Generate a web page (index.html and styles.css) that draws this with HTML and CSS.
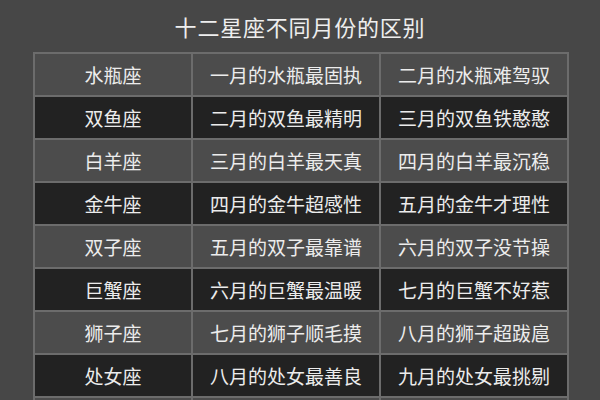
FILE: index.html
```html
<!DOCTYPE html>
<html lang="zh">
<head>
<meta charset="utf-8">
<title>十二星座不同月份的区别</title>
<link rel="stylesheet" href="styles.css">
</head>
<body>
<div class="page">
  <h1 class="title">十二星座不同月份的区别</h1>
  <table class="zodiac">
    <colgroup><col class="c1"><col class="c2"><col class="c3"></colgroup>
    <tbody>
      <tr class="light"><td>水瓶座</td><td>一月的水瓶最固执</td><td>二月的水瓶难驾驭</td></tr>
      <tr class="dark"><td>双鱼座</td><td>二月的双鱼最精明</td><td>三月的双鱼铁憨憨</td></tr>
      <tr class="light"><td>白羊座</td><td>三月的白羊最天真</td><td>四月的白羊最沉稳</td></tr>
      <tr class="dark"><td>金牛座</td><td>四月的金牛超感性</td><td>五月的金牛才理性</td></tr>
      <tr class="light"><td>双子座</td><td>五月的双子最靠谱</td><td>六月的双子没节操</td></tr>
      <tr class="dark"><td>巨蟹座</td><td>六月的巨蟹最温暖</td><td>七月的巨蟹不好惹</td></tr>
      <tr class="light"><td>狮子座</td><td>七月的狮子顺毛摸</td><td>八月的狮子超跋扈</td></tr>
      <tr class="dark"><td>处女座</td><td>八月的处女最善良</td><td>九月的处女最挑剔</td></tr>
      <tr class="light"><td></td><td></td><td></td></tr>
    </tbody>
  </table>
</div>
</body>
</html>
```
FILE: styles.css
```css
html, body {
  margin: 0;
  padding: 0;
  background: #474747;
}
body {
  font-family: "Noto Sans CJK SC", "Noto Sans", sans-serif;
  color: #ececec;
  overflow: hidden;
}
.page {
  width: 600px;
  height: 400px;
  overflow: hidden;
}
.title {
  margin: 0;
  height: 52px;
  line-height: 52px;
  font-size: 22px;
  font-weight: normal;
  text-align: center;
  color: #eeeeee;
  letter-spacing: 0.8px;
}
.zodiac {
  margin-left: 33px;
  width: 534px;
  border-collapse: collapse;
  table-layout: fixed;
  border: 2px solid #6c6c6c;
}
.c1 { width: 158px; }
.c2 { width: 188px; }
.c3 { width: 188px; }
.zodiac td {
  height: 41px;
  padding: 0;
  border: 2px solid #6c6c6c;
  text-align: center;
  font-size: 19px;
  line-height: 41px;
  white-space: nowrap;
}
.light td { background: #4c4c4c; }
.dark td { background: #222222; }
```
